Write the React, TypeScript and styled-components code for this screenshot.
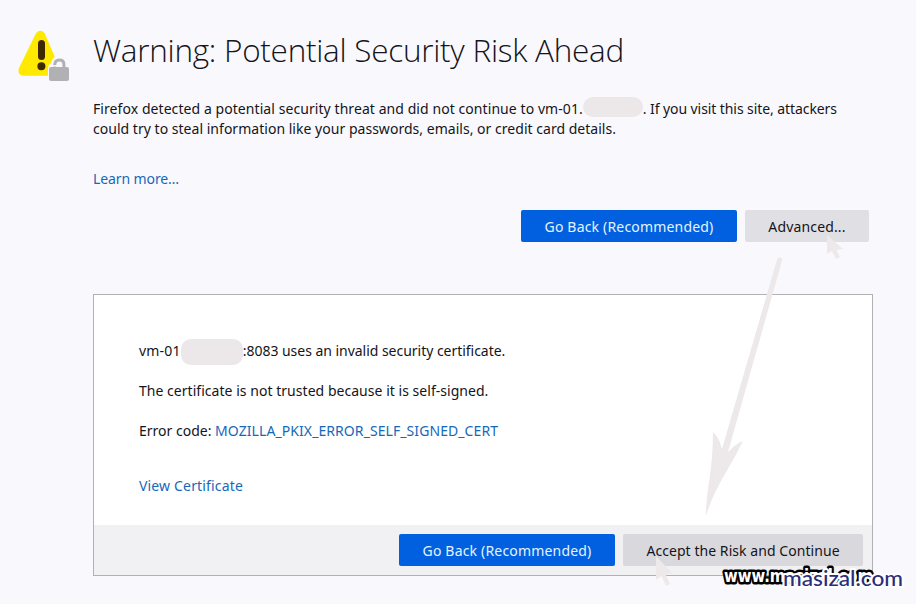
import React from "react";
import styled, { createGlobalStyle } from "styled-components";

const GlobalStyle = createGlobalStyle`
  body { margin: 0; background: #f9f9fb; }
  * { box-sizing: border-box; }
`;

const Page = styled.main`
  position: relative;
  width: 916px;
  height: 604px;
  overflow: hidden;
  background: #f9f9fd;
  color: #15141a;
  font-family: "Noto Sans", "Open Sans", sans-serif;
  font-size: 14px;
  line-height: 20px;
  display: grid;
  grid-template-columns: 93px 780px;
  align-content: start;
`;

const IconCell = styled.div`
  padding: 29px 0 0 18px;
  svg { display: block; }
`;

const Content = styled.div`
  display: flex;
  flex-direction: column;
`;

const Title = styled.h1`
  margin: 28px 0 0;
  height: 45px;
  font-family: "Open Sans", "Noto Sans", sans-serif;
  font-size: 31.5px;
  line-height: 44px;
  font-weight: 300;
  letter-spacing: -0.27px;
  white-space: nowrap;
`;

const Intro = styled.div`
  margin-top: 26px;
`;

const Line = styled.p<{ $track?: number; $gap?: number }>`
  display: flex;
  align-items: center;
  margin: ${(p) => p.$gap ?? 0}px 0 0;
  height: 20px;
  white-space: pre;
  letter-spacing: ${(p) => p.$track ?? 0}px;
`;

const Run = styled.span<{ $track: number }>`
  letter-spacing: ${(p) => p.$track}px;
`;

const Link = styled.a`
  color: #1668bb;
`;

const Redaction = styled.span<{ $w: number; $h: number; $shift?: number }>`
  display: block;
  flex: none;
  width: ${(p) => p.$w}px;
  height: ${(p) => p.$h}px;
  border-radius: 10px;
  background: #ece7e8;
  margin-top: ${(p) => p.$shift ?? 0}px;
`;

const Actions = styled.div`
  display: flex;
  justify-content: flex-end;
  gap: 8px;
  margin-top: 21px;
  padding-right: 4px;
`;

const Button = styled.button<{ $primary?: boolean; $w: number; $track?: number; $bg?: string }>`
  width: ${(p) => p.$w}px;
  height: 32px;
  padding: 1px 0 0;
  border: 0;
  border-radius: 2px;
  font: inherit;
  white-space: nowrap;
  letter-spacing: ${(p) => p.$track ?? 0}px;
  color: ${(p) => (p.$primary ? "#e4f4ff" : "#15141a")};
  background: ${(p) => (p.$primary ? "#0060df" : p.$bg ?? "#e0e0e4")};
`;

const Panel = styled.section`
  margin-top: 52px;
  width: 780px;
  height: 282px;
  border: 1px solid #b1b1b5;
  background: #fff;
  display: flex;
  flex-direction: column;
`;

const PanelBody = styled.div`
  flex: 1;
  padding: 46px 45px 0;
`;

const PanelFooter = styled.div`
  display: flex;
  justify-content: flex-end;
  gap: 8px;
  height: 50px;
  padding: 9px 9px 0 0;
  background: #f1f1f3;
`;

const Annotations = styled.svg`
  position: absolute;
  inset: 0;
  pointer-events: none;
`;

function WarningIcon() {
  return (
    <svg width="54" height="54" viewBox="0 0 54 54">
      <path d="M18 4.3Q22.500 -.6 26.700 4.3L41.500 39Q43.500 45.8 37 46.8H5Q-1 45.8 1 39Z" fill="#ffe900" />
      <rect x="20" y="11" width="7" height="20" rx="3.5" fill="#3e2800" />
      <circle cx="23.4" cy="37.2" r="4" fill="#3e2800" />
      <path d="M30 53V38.5Q30 36 33 34.5Q34 27 41 26.5Q48 27 49.500 35Q53 36 53 39V53Z" fill="#f9f9fd" />
      <path d="M36.7 40V36Q37 31 41.2 31Q45.700 31 45.900 35V40" fill="none" stroke="#b1b1b3" strokeWidth="3" />
      <path d="M34 36.8H41" stroke="#f9f9fd" strokeWidth="1.5" />
      <rect x="31" y="38" width="20" height="14" rx="2" fill="#b1b1b3" />
    </svg>
  );
}

export default function App() {
  return (
    <>
      <GlobalStyle />
      <Page>
        <IconCell>
          <WarningIcon />
        </IconCell>
        <Content>
          <Title>Warning: Potential Security Risk Ahead</Title>
          <Intro>
            <Line>
              <Run $track={0.07}>Firefox detected a potential security threat and did not continue to vm-01.</Run>
              <Redaction $w={60} $h={20} $shift={-4} />
              <Run $track={-0.08}>. If you visit this site, attackers</Run>
            </Line>
            <Line $track={0.025}>could try to steal information like your passwords, emails, or credit card details.</Line>
          </Intro>
          <Line $gap={30} $track={-0.1}>
            <Link>Learn more…</Link>
          </Line>
          <Actions>
            <Button $primary $w={216} $track={0.18}>Go Back (Recommended)</Button>
            <Button $w={124} $track={0.15}>Advanced...</Button>
          </Actions>
          <Panel>
            <PanelBody>
              <Line>
                <Run $track={0.2}>vm-01</Run>
                <Redaction $w={62} $h={26} $shift={1} />
                <Run $track={-0.03}>:8083 uses an invalid security certificate.</Run>
              </Line>
              <Line $gap={20} $track={0.035}>The certificate is not trusted because it is self-signed.</Line>
              <Line $gap={20}>
                Error code: <Link><Run $track={0.075}>MOZILLA_PKIX_ERROR_SELF_SIGNED_CERT</Run></Link>
              </Line>
              <Line $gap={35} $track={0.16}>
                <Link>View Certificate</Link>
              </Line>
            </PanelBody>
            <PanelFooter>
              <Button $primary $w={216} $track={0.18}>Go Back (Recommended)</Button>
              <Button $w={240} $bg="#d9d9dd" $track={0.06}>Accept the Risk and Continue</Button>
            </PanelFooter>
          </Panel>
        </Content>
        <Annotations width="916" height="604" viewBox="0 0 916 604">
          <g fill="#ede8e9">
            <path d="M777.5 258Q780 256.500 782.500 259L728 452Q737 443 743 441Q736 455 729 467Q711 497 706 516Q706 500 709.500 479Q713 455 713 432Q719 437 722 449Z" />
            <path d="M827 235L843 249L836.500 250L840 257L836 259L832 251L827 254Z" />
            <path d="M656 556L672 573L665.500 574L670 584L666 586L661.500 576L656 580Z" />
          </g>
          <text x="724" y="582" textLength="149" lengthAdjust="spacingAndGlyphs" fontFamily="DejaVu Sans, sans-serif" fontWeight="700" fontSize="17" fill="#fff" stroke="#000" strokeWidth="5" strokeLinejoin="round" paintOrder="stroke">www.masizal.com</text>
          <text x="783" y="586" textLength="120" lengthAdjust="spacingAndGlyphs" fontFamily="Lato, sans-serif" fontSize="21.5" fontWeight="500" fill="#2b2d78" stroke="#fff" strokeWidth="4" strokeLinejoin="round" paintOrder="stroke">masizal.com</text>
        </Annotations>
      </Page>
    </>
  );
}
